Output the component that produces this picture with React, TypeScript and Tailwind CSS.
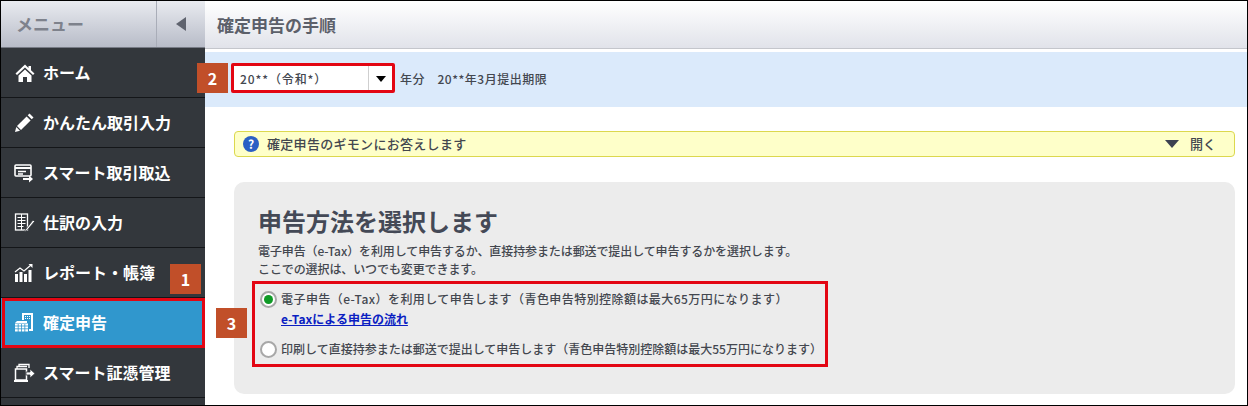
import React from 'react';

const font = "font-['Noto_Sans_CJK_JP','Liberation_Sans',sans-serif]";

function HomeIcon() {
  return (
    <svg width="20" height="20" viewBox="0 0 20 20" fill="white">
      <path d="M10 1.500L.5 10.500 2 12l8-7.500 8 7.500 1.500-1.500-3.500-3.300V3h-2.500v1.900z" />
      <path d="M3.500 12.500L10 6.500l6.500 6V19h-4.500v-5H8v5H3.500z" />
    </svg>
  );
}

function PencilIcon() {
  return (
    <svg width="21" height="21" viewBox="0 0 21 21" fill="white">
      <path d="M15.500 1.500l4 4-1.800 1.800-4-4z" />
      <path d="M12.600 4.400l4 4L7 18l-4-4z" />
      <path d="M2.300 15l3.700 3.700-5 1.300z" />
    </svg>
  );
}

function ImportIcon() {
  return (
    <svg width="21" height="20" viewBox="0 0 21 20" fill="none" stroke="white">
      <rect x="1" y="2" width="16" height="11" rx="1" strokeWidth="1.6" />
      <path d="M1 5h16" strokeWidth="2" />
      <path d="M4 8.500h8M4 11h5" strokeWidth="1.300" />
      <path d="M9 16h6" strokeWidth="2" />
      <path d="M15 12.500l4 3.500-4 3.500z" fill="white" stroke="none" />
    </svg>
  );
}

function JournalIcon() {
  return (
    <svg width="21" height="20" viewBox="0 0 21 20" fill="none" stroke="white">
      <rect x="1.500" y="1" width="12" height="16" strokeWidth="1.300" />
      <path d="M3.500 4.500h8M3.500 7.500h8M3.500 10.500h8M3.500 13.500h6M7.500 1v16" strokeWidth="1" />
      <path d="M19 7l-7 9-2 3 3-1.500 7.500-9z" fill="white" stroke="#33373c" strokeWidth="0.800" />
    </svg>
  );
}

function ReportIcon() {
  return (
    <svg width="21" height="20" viewBox="0 0 21 20" fill="white">
      <rect x="1" y="11" width="3" height="8" />
      <rect x="5.500" y="9" width="3" height="10" />
      <rect x="10" y="11" width="3" height="8" />
      <rect x="14.500" y="7" width="3" height="12" />
      <path d="M1 9l5-4 4 3 7-6" fill="none" stroke="white" strokeWidth="1.200" />
      <path d="M14.500 1h4v4z" />
    </svg>
  );
}

function TaxIcon() {
  return (
    <svg width="21" height="22" viewBox="0 0 21 22" fill="white">
      <path d="M8 1h11v18H15V17h2V3H10v5H8z" />
      <path d="M11 4.500h5M11 6.500h5" stroke="white" strokeWidth="1" strokeDasharray="1 1" />
      <path d="M1 11l2-2h10v2z" />
      <rect x="1" y="11.500" width="13" height="8" />
      <path d="M1 14h13M1 16.800h13M4.200 12v8M7.500 12v8M10.800 12v8" stroke="#3097cd" strokeWidth="0.800" />
    </svg>
  );
}

function VoucherIcon() {
  return (
    <svg width="21" height="20" viewBox="0 0 21 20" fill="none" stroke="white">
      <path d="M5 4V1.500h10V5" strokeWidth="1.300" />
      <path d="M3 6V3.500h10" strokeWidth="1.300" />
      <rect x="1.500" y="6" width="11" height="11" strokeWidth="1.500" />
      <path d="M0 18h14" strokeWidth="2" />
      <path d="M12 9h4V6l5 4.500-5 4.500v-3h-4z" fill="white" stroke="#33373c" strokeWidth="0.800" />
    </svg>
  );
}

const menu = [
  { label: 'ホーム', icon: <HomeIcon /> },
  { label: 'かんたん取引入力', icon: <PencilIcon /> },
  { label: 'スマート取引取込', icon: <ImportIcon /> },
  { label: '仕訳の入力', icon: <JournalIcon /> },
  { label: 'レポート・帳簿', icon: <ReportIcon /> },
  { label: '確定申告', icon: <TaxIcon />, active: true },
  { label: 'スマート証憑管理', icon: <VoucherIcon /> },
];

function Badge({ n, className }: { n: number; className: string }) {
  return (
    <div className={`absolute w-[31px] h-[30px] bg-[#c14f29] text-white text-[16px] font-bold flex items-center justify-center ${className}`}>
      {n}
    </div>
  );
}

function Radio({ checked }: { checked?: boolean }) {
  return (
    <span className="w-[17px] h-[17px] shrink-0 rounded-full bg-white border-2 border-[#a8a8a8] flex items-center justify-center">
      {checked && <span className="w-[9px] h-[9px] rounded-full bg-[#0f9a26]" />}
    </span>
  );
}

export default function App() {
  return (
    <div className={`relative w-[1248px] h-[406px] overflow-hidden border border-black flex bg-white text-[#43474f] ${font}`}>
      <aside className="w-[204px] shrink-0 flex flex-col bg-[#33373c]">
        <div className="h-[47px] shrink-0 flex border-b border-[#777b85] bg-gradient-to-b from-[#e9ebf0] to-[#b8bcc8]">
          <div className="flex-1 pl-[15px] flex items-center text-[17px] font-bold text-[#7e828c] border-r border-[#a9adb8]">メニュー</div>
          <div className="w-[48px] flex items-center justify-center">
            <span className="w-0 h-0 border-y-[7px] border-y-transparent border-r-[10px] border-r-[#5f636e]" />
          </div>
        </div>
        {menu.map((m) => (
          <div
            key={m.label}
            className={`h-[50px] shrink-0 flex items-center gap-[8px] pl-[13px] text-[16px] font-bold text-white border-b ${
              m.active ? 'bg-[#3097cd] border-transparent' : 'border-[#141619]'
            }`}
          >
            <span className="w-[21px] flex justify-center">{m.icon}</span>
            <span className="-mt-[1px]">{m.label}</span>
          </div>
        ))}
      </aside>

      <main className="flex-1 min-w-0 flex flex-col">
        <header className="h-[48px] shrink-0 pl-[12px] flex items-center text-[17px] font-bold text-[#5c606a] border-b border-[#c4c6cc] bg-gradient-to-b from-white to-[#e1e3ea]">
          確定申告の手順
        </header>
        <div className="h-[55px] mt-[3px] shrink-0 bg-[#dbeafb] pl-[28px] flex items-center text-[12px] font-medium">
          <div className="w-[160px] h-[25px] bg-white flex items-center -mt-[2px]">
            <span className="flex-1 pl-[7px] text-[12px] tracking-[0.9px]">20**（令和*）</span>
            <span className="w-[25px] h-full border-l border-[#cfcfcf] flex items-center justify-center">
              <span className="w-0 h-0 border-x-[5px] border-x-transparent border-t-[6px] border-t-black" />
            </span>
          </div>
          <span className="ml-[7px] -mt-[2px] tracking-[0.5px]">年分　20**年3月提出期限</span>
        </div>
        <div className="flex-1 pl-[29px] pr-[12px] pt-[24px]">
          <div className="h-[26px] border border-[#dcd84e] rounded-[4px] bg-[#feffc9] flex items-center pl-[8px] pr-[18px] text-[13px] font-medium">
            <span className="w-[16px] h-[16px] rounded-full bg-[#2a5fc4] text-white text-[12px] font-bold leading-none flex items-center justify-center">?</span>
            <span className="ml-[8px] tracking-[0.3px]">確定申告のギモンにお答えします</span>
            <span className="ml-auto w-0 h-0 border-x-[7px] border-x-transparent border-t-[8px] border-t-[#3c4150]" />
            <span className="ml-[11px]">開く</span>
          </div>
          <section className="mt-[25px] h-[212px] rounded-[10px] bg-[#ececec] pl-[24px] pt-[23px]">
            <h2 className="text-[24px] leading-[32px] font-bold text-[#444956]">申告方法を選択します</h2>
            <p className="mt-[5px] text-[12px] leading-[18px] font-medium tracking-[-0.1px]">
              電子申告（e-Tax）を利用して申告するか、直接持参または郵送で提出して申告するかを選択します。
              <br />
              ここでの選択は、いつでも変更できます。
            </p>
            <div className="mt-[11px] pl-[2px] text-[12px] font-medium">
              <label className="flex items-center gap-[4px] h-[20px] tracking-[0.44px]">
                <Radio checked />
                <span>電子申告（e-Tax）を利用して申告します（青色申告特別控除額は最大65万円になります）</span>
              </label>
              <a className="block ml-[21px] h-[19px] leading-[19px] text-[#0b1ec2] underline font-bold">e-Taxによる申告の流れ</a>
              <label className="flex items-center gap-[4px] h-[20px] mt-[11px]">
                <Radio />
                <span>印刷して直接持参または郵送で提出して申告します（青色申告特別控除額は最大55万円になります）</span>
              </label>
            </div>
          </section>
        </div>
      </main>

      <div className="absolute left-[1px] top-[297px] w-[203px] h-[50px] border-[3px] border-[#e30613] pointer-events-none" />
      <div className="absolute left-[230px] top-[62px] w-[164px] h-[30px] border-[3px] border-[#e30613] rounded-[2px] pointer-events-none" />
      <div className="absolute left-[251px] top-[280px] w-[576px] h-[86px] border-[3px] border-[#e30613] pointer-events-none" />
      <Badge n={1} className="left-[169px] top-[263px]" />
      <Badge n={2} className="left-[196px] top-[62px]" />
      <Badge n={3} className="left-[215px] top-[307px]" />
    </div>
  );
}
